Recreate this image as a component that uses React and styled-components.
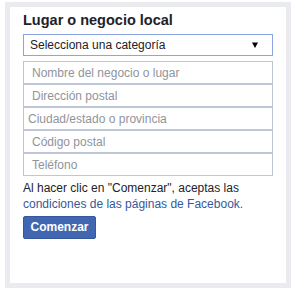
import React from "react";
import styled, { createGlobalStyle } from "styled-components";

const GlobalStyle = createGlobalStyle`
  html, body {
    margin: 0;
    padding: 0;
    background: #ffffff;
  }
  body {
    font-family: "Liberation Sans", Arial, Helvetica, sans-serif;
    color: #1d2129;
  }
  * { box-sizing: border-box; }
`;

const Frame = styled.div`
  margin: 2px 0 0 5px;
  width: 286px;
  height: 286px;
  border: 5px solid #e9ebee;
  background: #ffffff;
  padding: 4px 13px 0 13px;
`;

const Heading = styled.h3`
  margin: 0 0 5px 0;
  font-size: 14.5px;
  line-height: 18px;
  font-weight: bold;
  color: #1d2129;
`;

const Select = styled.div`
  height: 22px;
  border: 1px solid #8aa5e0;
  display: flex;
  align-items: center;
  justify-content: space-between;
  padding: 0 14px 0 6px;
  font-size: 12px;
  line-height: 20px;
  color: #1d2129;
`;

const Arrow = styled.svg`
  width: 6px;
  height: 6px;
  display: block;
`;

const Fields = styled.div`
  margin-top: 5px;
  display: flex;
  flex-direction: column;
`;

const Field = styled.input`
  display: block;
  width: 100%;
  height: 23px;
  margin: 0;
  border: 1px solid #bdc7d8;
  border-radius: 0;
  padding: 0 4px 0 ${(p) => p.$indent}px;
  font-family: "Liberation Sans", Arial, sans-serif;
  font-size: 12px;
  color: #1d2129;
  background: #ffffff;
  outline: none;
  &::placeholder {
    color: #90949c;
    opacity: 1;
  }
`;

const Terms = styled.p`
  margin: 4px 0 0 0;
  font-size: 12px;
  line-height: 16px;
  color: #1d2129;
`;

const Link = styled.a`
  color: #365899;
  text-decoration: none;
`;

const Button = styled.button`
  margin-top: 4px;
  height: 23px;
  width: 73px;
  padding: 0;
  background: #4267b2;
  border: 1px solid #365899;
  border-radius: 2px;
  color: #ffffff;
  font-family: "Liberation Sans", Arial, sans-serif;
  font-weight: bold;
  font-size: 12px;
  line-height: 21px;
  cursor: pointer;
`;

const fields = [
  { placeholder: "Nombre del negocio o lugar", indent: 8 },
  { placeholder: "Dirección postal", indent: 8 },
  { placeholder: "Ciudad/estado o provincia", indent: 4 },
  { placeholder: "Código postal", indent: 8 },
  { placeholder: "Teléfono", indent: 8 },
];

export default function App() {
  return (
    <>
      <GlobalStyle />
      <Frame>
        <Heading>Lugar o negocio local</Heading>
        <Select>
          <span>Selecciona una categoría</span>
          <Arrow viewBox="0 0 6 6">
            <polygon points="0,0.5 6,0.5 3,6" fill="#000" />
          </Arrow>
        </Select>
        <Fields>
          {fields.map((f) => (
            <Field key={f.placeholder} placeholder={f.placeholder} $indent={f.indent} />
          ))}
        </Fields>
        <Terms>
          Al hacer clic en "Comenzar", aceptas las{" "}
          <Link href="#">condiciones de las páginas de Facebook.</Link>
        </Terms>
        <Button>Comenzar</Button>
      </Frame>
    </>
  );
}
